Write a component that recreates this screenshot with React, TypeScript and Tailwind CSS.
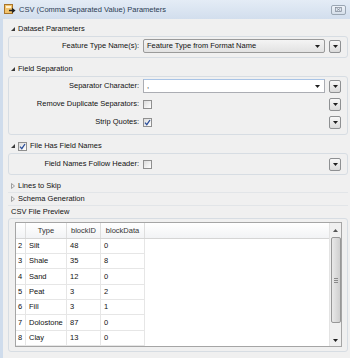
import React from "react";

function DropArrow() {
  return (
    <svg width="5" height="3" viewBox="0 0 5 3">
      <path d="M0 0h5L2.5 3z" fill="#1f1f1f" />
    </svg>
  );
}

function SideButton() {
  return (
    <div className="w-[12px] h-[13px] border border-[#8e9092] rounded-[2px] bg-linear-to-b from-[#f8f8f8] to-[#dadada] flex items-center justify-center">
      <DropArrow />
    </div>
  );
}

function CheckBox({ checked = false }: { checked?: boolean }) {
  return (
    <div className="w-[9px] h-[9px] border border-[#8f8f8f] bg-linear-to-br from-[#dcdcdc] to-[#ffffff] flex items-center justify-center">
      {checked ? (
        <svg width="7" height="7" viewBox="0 0 7 7">
          <path d="M1 3.6l1.8 2L6 1" fill="none" stroke="#2c4f9a" strokeWidth="1.3" />
        </svg>
      ) : null}
    </div>
  );
}

function Expanded() {
  return (
    <svg width="4" height="4" viewBox="0 0 4 4">
      <path d="M4 0v4H0z" fill="#3a3a3a" />
    </svg>
  );
}

function Collapsed() {
  return (
    <svg width="4" height="6" viewBox="0 0 4 6">
      <path d="M0.5 0.5L3.5 3L0.5 5.5z" fill="none" stroke="#8a8a8a" strokeWidth="0.8" />
    </svg>
  );
}

function FieldRow({ label, children }: { label: string; children: React.ReactNode }) {
  return (
    <div className="flex items-center h-[14px]">
      <div className="w-[130px] text-right whitespace-nowrap">{label}</div>
      <div className="ml-[4px] w-[182px] h-full flex items-center">{children}</div>
      <div className="ml-[4px]">
        <SideButton />
      </div>
    </div>
  );
}

const rows = [
  { n: "2", type: "Silt", id: "48", data: "0", h: "h-[15px]" },
  { n: "3", type: "Shale", id: "35", data: "8", h: "h-[15px]" },
  { n: "4", type: "Sand", id: "12", data: "0", h: "h-[16px]" },
  { n: "5", type: "Peat", id: "3", data: "2", h: "h-[15px]" },
  { n: "6", type: "Fill", id: "3", data: "1", h: "h-[15px]" },
  { n: "7", type: "Dolostone", id: "87", data: "0", h: "h-[16px]" },
  { n: "8", type: "Clay", id: "13", data: "0", h: "h-[15px]" },
];

export default function App() {
  return (
    <div
      className="w-[350px] h-[358px] bg-[#f0f0f0] text-[7.5px] leading-none text-[#111] overflow-hidden"
      style={{ fontFamily: '"Liberation Sans", Arial, sans-serif' }}
    >
      {/* title bar */}
      <div className="h-[19px] bg-linear-to-b from-[#e4ecf6] to-[#d2deed] flex items-center pl-[4px] pr-[4px]">
        <svg width="12" height="11" viewBox="0 0 12 11">
          <rect x="0.5" y="0.5" width="8" height="9" fill="#f2c46e" stroke="#a8742a" />
          <rect x="2" y="2" width="5" height="2" fill="#fff3d6" />
          <path d="M5 6.5h4.5M8 4.5l2.5 2-2.5 2" fill="none" stroke="#222" strokeWidth="1.3" />
        </svg>
        <span className="ml-[3px] text-[#2b3b52]">CSV (Comma Separated Value) Parameters</span>
        <div className="ml-auto w-[15px] h-[10px] border border-[#9aa6b3] rounded-[2px] bg-linear-to-b from-[#eef3f9] to-[#d5dfea] flex items-center justify-center">
          <svg width="7" height="5" viewBox="0 0 7 5">
            <rect x="0.5" y="0.5" width="6" height="4" fill="none" stroke="#7d8794" strokeWidth="0.7" />
            <path d="M1.5 1l4 3M5.5 1l-4 3" stroke="#7d8794" strokeWidth="0.7" />
          </svg>
        </div>
      </div>

      <div className="flex h-[339px]">
        <div className="w-[3px] bg-[#cfdcec]" />
        <div className="flex-1 pl-[5px] pr-[2px]">
          {/* Dataset Parameters */}
          <div className="h-[14px] mt-[3px] flex items-center pl-[3px]">
            <Expanded />
            <span className="ml-[3px]">Dataset Parameters</span>
          </div>
          <div className="border border-[#d7dde3] rounded-[3px] pt-[2px] pb-[4px]">
            <FieldRow label="Feature Type Name(s):">
              <div className="w-full h-[14px] border border-[#9a9a9a] rounded-[2px] bg-linear-to-b from-[#f4f4f4] to-[#e2e2e2] flex items-center pl-[3px] pr-[4px]">
                <span>Feature Type from Format Name</span>
                <span className="ml-auto">
                  <DropArrow />
                </span>
              </div>
            </FieldRow>
          </div>

          {/* Field Separation */}
          <div className="h-[14px] mt-[4px] flex items-center pl-[3px]">
            <Expanded />
            <span className="ml-[3px]">Field Separation</span>
          </div>
          <div className="border border-[#d7dde3] rounded-[3px] pt-[2px] pb-[5px] flex flex-col gap-[4px]">
            <FieldRow label="Separator Character:">
              <div className="w-full h-[14px] border border-[#abadb3] border-t-[#a9c4e6] bg-white flex items-center pl-[3px] pr-[4px]">
                <span>,</span>
                <span className="ml-auto">
                  <DropArrow />
                </span>
              </div>
            </FieldRow>
            <FieldRow label="Remove Duplicate Separators:">
              <CheckBox />
            </FieldRow>
            <FieldRow label="Strip Quotes:">
              <CheckBox checked />
            </FieldRow>
          </div>

          {/* File Has Field Names */}
          <div className="h-[14px] mt-[4px] flex items-center pl-[3px]">
            <Expanded />
            <span className="ml-[3px]">
              <CheckBox checked />
            </span>
            <span className="ml-[3px]">File Has Field Names</span>
          </div>
          <div className="border border-[#d7dde3] rounded-[3px] pt-[3px] pb-[3px]">
            <FieldRow label="Field Names Follow Header:">
              <CheckBox />
            </FieldRow>
          </div>

          {/* collapsed sections */}
          <div className="h-[13px] mt-[5px] flex items-center pl-[3px] border-b border-[#e2e5e8]">
            <Collapsed />
            <span className="ml-[3px]">Lines to Skip</span>
          </div>
          <div className="h-[13px] flex items-center pl-[3px] border-b border-[#e2e5e8]">
            <Collapsed />
            <span className="ml-[3px]">Schema Generation</span>
          </div>
          <div className="h-[12px] flex items-center pl-[3px]">
            <span>CSV File Preview</span>
          </div>

          {/* preview table */}
          <div className="border border-[#d7dde3] rounded-[3px] pt-[3px] pb-[4px] pl-[6px] pr-[5px]">
            <div className="h-[125px] border border-[#a5a5a5] bg-white flex">
              <div className="flex-1 flex flex-col">
                <div className="h-[16px] flex border-b border-[#d5d5d5] bg-linear-to-b from-[#ffffff] to-[#f2f3f5] text-[#333]">
                  <div className="w-[10px] border-r border-[#dedede]" />
                  <div className="w-[41px] border-r border-[#dedede] flex items-center justify-center">Type</div>
                  <div className="w-[34px] border-r border-[#dedede] flex items-center justify-center">blockID</div>
                  <div className="w-[44px] border-r border-[#dedede] flex items-center justify-center">blockData</div>
                </div>
                {rows.map((r) => (
                  <div key={r.n} className={`${r.h} flex`}>
                    <div className="w-[10px] border-r border-b border-[#e6e6e6] flex items-center pl-[2px]">{r.n}</div>
                    <div className="w-[41px] border-r border-b border-[#e6e6e6] flex items-center pl-[3px]">{r.type}</div>
                    <div className="w-[34px] border-r border-b border-[#e6e6e6] flex items-center pl-[3px]">{r.id}</div>
                    <div className="w-[44px] border-r border-b border-[#e6e6e6] flex items-center pl-[3px]">{r.data}</div>
                  </div>
                ))}
              </div>
              {/* scrollbar */}
              <div className="w-[12px] bg-[#f0f0f0] border-l border-[#e3e3e3] flex flex-col items-center">
                <div className="h-[14px] w-full flex items-center justify-center">
                  <svg width="5" height="3" viewBox="0 0 5 3">
                    <path d="M0 3h5L2.5 0z" fill="#555" />
                  </svg>
                </div>
                <div className="w-[10px] h-[86px] border border-[#979797] rounded-[2px] bg-linear-to-r from-[#e9e9e9] to-[#cfcfcf] flex flex-col items-center justify-center gap-[1px]">
                  <div className="w-[4px] h-[1px] bg-[#8a8a8a]" />
                  <div className="w-[4px] h-[1px] bg-[#8a8a8a]" />
                  <div className="w-[4px] h-[1px] bg-[#8a8a8a]" />
                </div>
                <div className="flex-1 w-full flex items-end justify-center pb-[4px]">
                  <DropArrow />
                </div>
              </div>
            </div>
          </div>
        </div>
      </div>
    </div>
  );
}
